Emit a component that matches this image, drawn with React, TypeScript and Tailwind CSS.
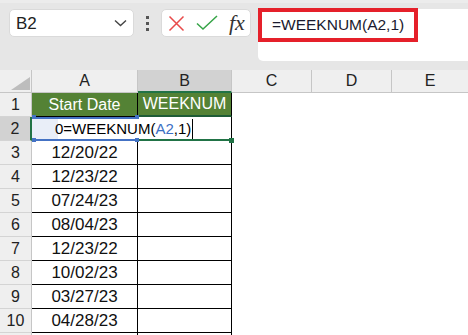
import React from "react";

const font = { fontFamily: '"Liberation Sans", Arial, sans-serif' };

const dates = ["12/20/22", "12/23/22", "07/24/23", "08/04/23", "12/23/22", "10/02/23", "03/27/23", "04/28/23"];

function RowHead({ n, active }: { n: number; active?: boolean }) {
  return (
    <div
      className={
        "w-[32px] h-full flex items-center justify-center text-[16px] text-[#222] border-b border-[#d4d4d4] " +
        (active ? "bg-[#d2d2d2] border-r-2 border-r-[#217346]" : "bg-[#efefef] border-r border-r-[#c6c6c6]")
      }
    >
      {n}
    </div>
  );
}

export default function App() {
  return (
    <div className="w-[468px] h-[335px] overflow-hidden bg-white relative" style={font}>
      {/* Toolbar */}
      <div className="h-[70px] bg-[#e6e6e6] border-t-[3px] border-[#ececec] flex items-start pt-[6px]">
        <div className="ml-[9px] w-[125px] h-[28px] bg-white rounded-[5px] border border-[#dadada] flex items-center justify-between pl-[6px] pr-[6px]">
          <span className="text-[17px] text-[#222] leading-none">B2</span>
          <svg width="13" height="8" viewBox="0 0 13 8">
            <path d="M1 1.5 L6.5 6.5 L12 1.5" fill="none" stroke="#444" strokeWidth="1.4" />
          </svg>
        </div>
        <div className="w-[27px] h-[28px] flex flex-col items-center justify-center gap-[3px]">
          <div className="w-[3px] h-[3px] bg-[#555]" />
          <div className="w-[3px] h-[3px] bg-[#555]" />
          <div className="w-[3px] h-[3px] bg-[#555]" />
        </div>
        <div className="w-[90px] h-[28px] bg-white rounded-[5px] border border-[#dadada] flex items-center pl-[6px]">
          <svg width="17" height="17" viewBox="0 0 17 17">
            <path d="M1.5 1.5 L15.5 15.5 M15.5 1.5 L1.5 15.5" stroke="#e84a4a" strokeWidth="1.5" fill="none" />
          </svg>
          <svg width="22" height="16" viewBox="0 0 22 16" className="ml-[11px]">
            <path d="M1 8.5 L7 14 L21 1" stroke="#36a447" strokeWidth="1.5" fill="none" />
          </svg>
          <span
            className="ml-[11px] text-[22px] italic text-[#333] leading-none"
            style={{ fontFamily: '"Liberation Serif", "Times New Roman", serif' }}
          >
            fx
          </span>
        </div>
        <div className="ml-[7px] flex-1 h-[52px] bg-white rounded-l-[5px]">
          <div className="-mt-px w-[160px] h-[34px] border-[4px] border-[#e5202a] flex items-center pl-[10px]">
            <span className="text-[15.5px] text-[#1a1a2e] leading-none">=WEEKNUM(A2,1)</span>
          </div>
        </div>
      </div>

      {/* Column headers */}
      <div className="flex h-[23px] bg-[#efefef] text-[16px] text-[#222]">
        <div className="w-[32px] h-full border-r border-[#c6c6c6] border-b border-b-[#c6c6c6] relative">
          <svg width="19" height="13" viewBox="0 0 19 13" className="absolute left-[11px] top-[7px]">
            <path d="M19 0 L19 13 L0 13 Z" fill="#bdbdbd" />
          </svg>
        </div>
        <div className="w-[106px] h-full flex items-center justify-center border-r border-[#c6c6c6] border-b border-b-[#c6c6c6]">A</div>
        <div className="w-[94px] h-full flex items-center justify-center bg-[#d2d2d2] border-r border-[#c6c6c6] border-b-2 border-b-[#217346]">B</div>
        <div className="w-[80px] h-full flex items-center justify-center border-r border-[#c6c6c6] border-b border-b-[#c6c6c6]">C</div>
        <div className="w-[80px] h-full flex items-center justify-center border-r border-[#c6c6c6] border-b border-b-[#c6c6c6]">D</div>
        <div className="flex-1 h-full flex items-center justify-center border-b border-b-[#c6c6c6]">E</div>
      </div>

      {/* Row 1 */}
      <div className="flex h-[24px] text-[16px]">
        <RowHead n={1} />
        <div className="w-[106px] h-full flex items-center justify-center bg-[#548235] text-white border-r border-b border-black">
          Start Date
        </div>
        <div className="w-[94px] h-full flex items-center justify-center bg-[#548235] text-white border-r border-black border-b-2 border-b-[#1e5c36]">
          WEEKNUM
        </div>
      </div>

      {/* Row 2 */}
      <div className="flex h-[24px] text-[16px] relative">
        <RowHead n={2} active />
        <div className="w-[106px] h-full border-b border-black relative">
          <div className="absolute left-0 top-0 w-[26px] h-[23px] bg-[#e9eef8]" />
          <div className="absolute inset-x-0 top-0 h-[2px] bg-[#4472c4]" />
          <div className="absolute inset-x-0 bottom-[-1px] h-[2px] bg-[#4472c4]" />
        </div>
        <div className="w-[94px] h-full border-r border-black border-b-2 border-b-[#217346]" />
        <div className="absolute left-[32px] top-[-2px] w-[4px] h-[4px] bg-[#4472c4]" />
        <div className="absolute left-[135px] top-[-2px] w-[4px] h-[4px] bg-[#4472c4]" />
        <div className="absolute left-[32px] top-[21px] w-[4px] h-[4px] bg-[#4472c4]" />
        <div className="absolute left-[135px] top-[21px] w-[4px] h-[4px] bg-[#4472c4]" />
        <div className="absolute left-[229px] top-[21px] w-[5px] h-[5px] bg-[#217346]" />
        <div className="absolute left-[55px] top-0 h-[24px] flex items-center text-[15px] text-black">
          <span>0=WEEKNUM(</span>
          <span className="text-[#3b6fc4]">A2</span>
          <span>,1)</span>
          <span className="ml-[1px] w-px h-[20px] bg-black" />
        </div>
      </div>

      {/* Rows 3-10 */}
      {dates.map((d, i) => (
        <div key={i} className="flex h-[24px] text-[17px] text-[#111]">
          <RowHead n={i + 3} />
          <div className="w-[106px] h-full flex items-center justify-center border-r border-b border-black">{d}</div>
          <div className="w-[94px] h-full border-r border-b border-black" />
        </div>
      ))}
      <div className="flex h-[24px]">
        <div className="w-[32px] h-full bg-[#efefef] border-r border-[#c6c6c6]" />
        <div className="w-[106px] h-full border-r border-black" />
        <div className="w-[94px] h-full border-r border-black" />
      </div>
    </div>
  );
}
